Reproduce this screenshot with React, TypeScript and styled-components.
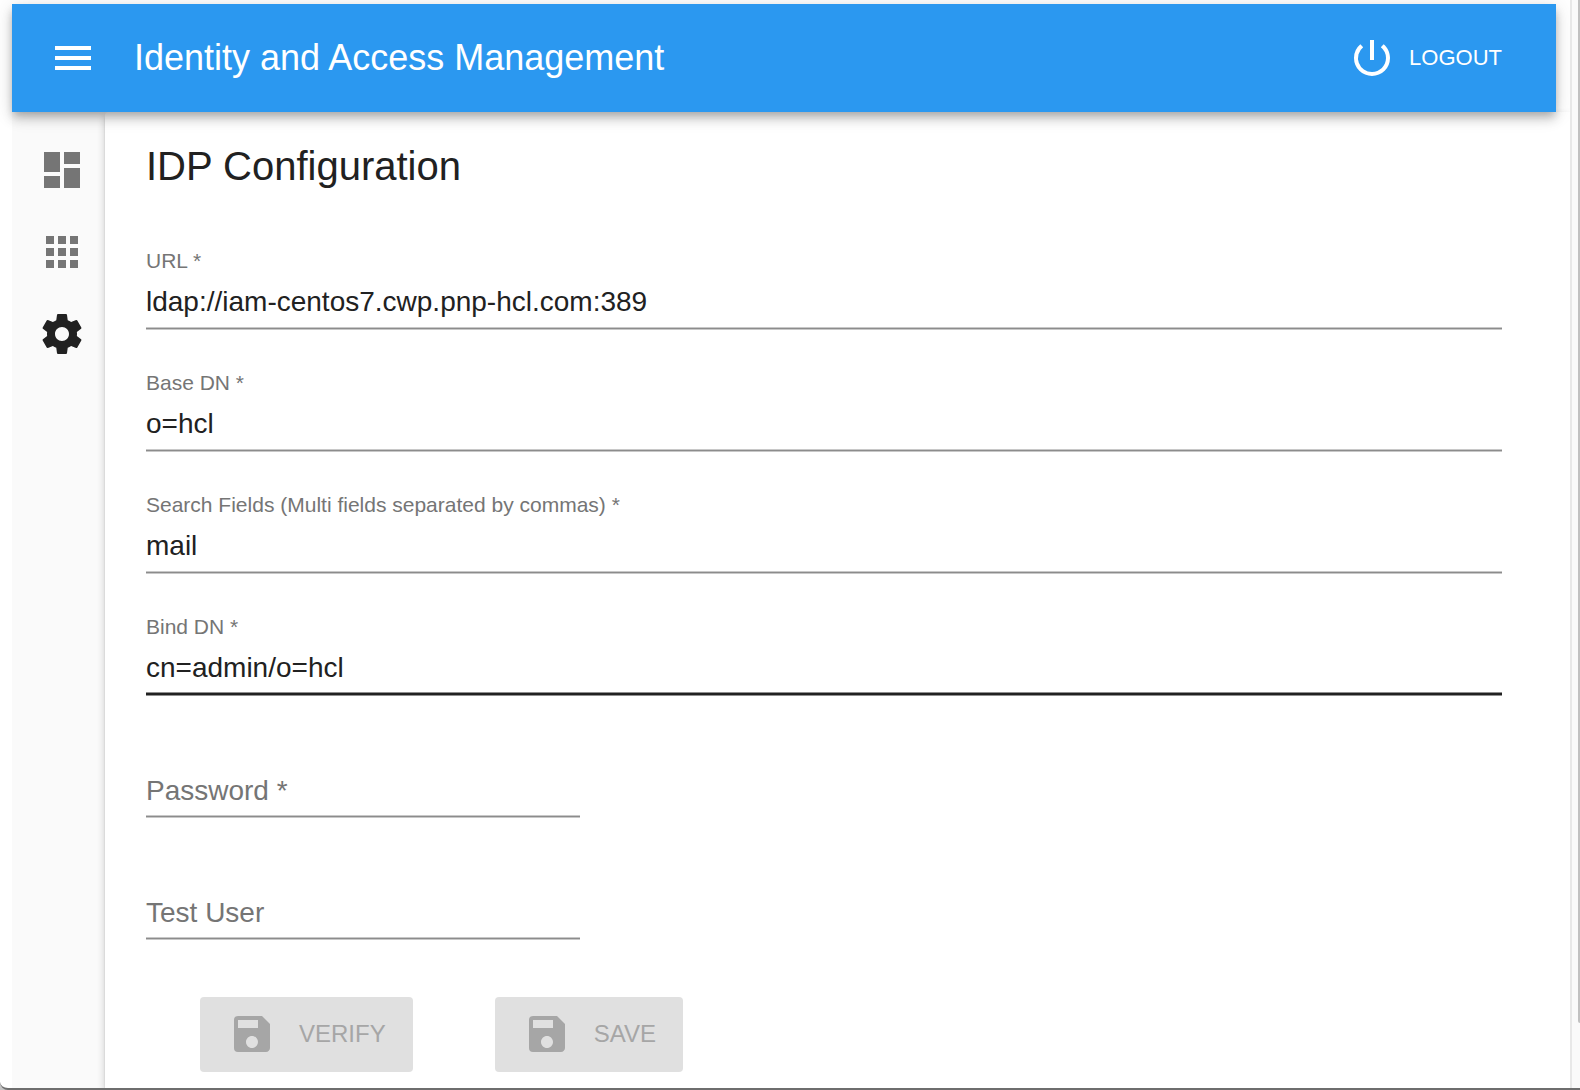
import React, { useState } from "react";
import styled, { createGlobalStyle } from "styled-components";
import { MdApps, MdDashboard, MdMenu, MdPowerSettingsNew, MdSave } from "react-icons/md";

const GlobalStyle = createGlobalStyle`
  *, *::before, *::after { box-sizing: border-box; }
  body {
    margin: 0;
    background: #c4c4c4;
    color: #212121;
    font-family: "Liberation Sans", Arial, Helvetica, sans-serif;
  }
  button, input { font: inherit; letter-spacing: inherit; }
`;

const Window = styled.div`
  display: grid;
  grid-template-columns: minmax(0, 1fr) 10px;
  min-height: 100vh;
  overflow: hidden;
  background: #fff;
  border-bottom: 2px solid #6e6e6e;
  border-bottom-left-radius: 8px;
`;

const Page = styled.div`
  display: flex;
  flex-direction: column;
  padding: 4px 0 0 12px;
  overflow: hidden;
`;

const ScrollTrack = styled.div`
  display: flex;
  justify-content: flex-end;
  background: #fafafa;
  border-left: 2px solid #e8e8e8;
`;

const ScrollThumb = styled.div`
  width: 2px;
  height: 94%;
  background: #c1c1c1;
  border-bottom-left-radius: 2px;
`;

const AppBar = styled.header`
  z-index: 2;
  display: flex;
  align-items: center;
  height: 108px;
  margin-right: 14px;
  padding: 0 54px 0 37px;
  color: #fff;
  background: #2b98f0;
  box-shadow:
    0 4px 8px -2px rgba(0, 0, 0, 0.2),
    0 8px 10px 0 rgba(0, 0, 0, 0.14),
    0 2px 20px 0 rgba(0, 0, 0, 0.12);
`;

const BarButton = styled.button`
  display: flex;
  align-items: center;
  gap: 13px;
  padding: 0;
  border: 0;
  background: none;
  color: inherit;
  font-size: 22px;
  line-height: 24px;
  cursor: pointer;
`;

const AppTitle = styled.div`
  flex: 1;
  margin-left: 37px;
  font-size: 36px;
  line-height: 48px;
`;

const Body = styled.div`
  flex: 1;
  display: flex;
`;

const SideNav = styled.nav`
  display: flex;
  flex-direction: column;
  gap: 34px;
  width: 93px;
  padding: 34px 0 0 26px;
  background: #fafafa;
`;

const NavLink = styled.a<{ $active?: boolean }>`
  display: block;
  width: 48px;
  height: 48px;
  color: ${(p) => (p.$active ? "#212121" : "#757575")};
`;

const Content = styled.main`
  z-index: 1;
  flex: 1;
  padding: 30px 68px 16px 41px;
  background: #fff;
  border-top-left-radius: 4px;
  box-shadow:
    0 4px 8px 0 rgba(0, 0, 0, 0.2),
    0 4px 2px 0 rgba(0, 0, 0, 0.14);
`;

const Heading = styled.h1`
  margin: 0 0 59px;
  font-size: 40px;
  font-weight: 400;
  line-height: 48px;
`;

const Fields = styled.div`
  display: flex;
  flex-direction: column;
  gap: 42px;
`;

const Field = styled.div<{ $short?: boolean }>`
  display: grid;
  grid-template-rows: 24px 56px;
  width: ${(p) => (p.$short ? "32%" : "100%")};
`;

const Label = styled.label<{ $resting: boolean }>`
  grid-column: 1;
  grid-row: ${(p) => (p.$resting ? 2 : 1)};
  align-self: end;
  padding-bottom: ${(p) => (p.$resting ? "10px" : "0")};
  color: #757575;
  font-size: ${(p) => (p.$resting ? "28px" : "21px")};
  line-height: ${(p) => (p.$resting ? "32px" : "24px")};
  pointer-events: none;
`;

const Input = styled.input<{ $highlight?: boolean }>`
  grid-column: 1;
  grid-row: 2;
  width: 100%;
  padding: 3px 0 0;
  border: 0;
  border-bottom: 1px solid ${(p) => (p.$highlight ? "#212121" : "#8c8c8c")};
  border-radius: 0;
  outline: 0;
  background: none;
  color: #212121;
  font-size: 28px;
  box-shadow: ${(p) =>
    p.$highlight
      ? "0 1px 0 #8f8f8f, inset 0 -1px 0 #212121, inset 0 -2px 0 #8f8f8f"
      : "0 1px 0 #c8c8c8, inset 0 -1px 0 #c8c8c8"};
`;

const Actions = styled.div`
  display: flex;
  gap: 82px;
  margin-top: 58px;
  padding-left: 54px;
`;

const ActionButton = styled.button`
  display: flex;
  align-items: center;
  gap: 23px;
  height: 75px;
  padding: 0 27px 1px 28px;
  border: 0;
  border-radius: 4px;
  background: #e0e0e0;
  color: #a6a6a6;
  font-size: 24px;
  line-height: 28px;
`;

const SettingsIcon = () => (
  <svg viewBox="0 0 24 24" width="48" height="48" fill="currentColor" aria-hidden="true">
    <path d="M19.43 12.98c.04-.32.07-.64.07-.98s-.03-.66-.07-.98l2.11-1.65c.19-.15.24-.42.12-.64l-2-3.46c-.12-.22-.39-.3-.61-.22l-2.49 1c-.52-.4-1.08-.73-1.69-.98l-.38-2.65C14.46 2.18 14.25 2 14 2h-4c-.25 0-.46.18-.49.42l-.38 2.65c-.61.25-1.17.59-1.69.98l-2.49-1c-.23-.09-.49 0-.61.22l-2 3.46c-.13.22-.07.49.12.64l2.11 1.65c-.04.32-.07.65-.07.98s.03.66.07.98l-2.11 1.65c-.19.15-.24.42-.12.64l2 3.46c.12.22.39.3.61.22l2.49-1c.52.4 1.08.73 1.69.98l.38 2.65c.03.24.24.42.49.42h4c.25 0 .46-.18.49-.42l.38-2.65c.61-.25 1.17-.59 1.69-.98l2.49 1c.23.09.49 0 .61-.22l2-3.46c.12-.22.07-.49-.12-.64l-2.11-1.65zM12 15.5c-1.93 0-3.5-1.57-3.5-3.5s1.57-3.5 3.5-3.5 3.5 1.57 3.5 3.5-1.57 3.5-3.5 3.5z" />
  </svg>
);

type FieldSpec = {
  id: string;
  label: string;
  initial: string;
  type?: string;
  short?: boolean;
  highlight?: boolean;
};

const FIELDS: FieldSpec[] = [
  { id: "url", label: "URL *", initial: "ldap://iam-centos7.cwp.pnp-hcl.com:389" },
  { id: "base-dn", label: "Base DN *", initial: "o=hcl" },
  { id: "search-fields", label: "Search Fields (Multi fields separated by commas) *", initial: "mail" },
  { id: "bind-dn", label: "Bind DN *", initial: "cn=admin/o=hcl", highlight: true },
  { id: "password", label: "Password *", initial: "", type: "password", short: true },
  { id: "test-user", label: "Test User", initial: "", short: true },
];

function TextField({ id, label, initial, type = "text", short, highlight }: FieldSpec) {
  const [value, setValue] = useState(initial);
  const [focused, setFocused] = useState(false);
  return (
    <Field $short={short}>
      <Label htmlFor={id} $resting={!value && !focused}>
        {label}
      </Label>
      <Input
        id={id}
        type={type}
        value={value}
        $highlight={highlight || focused}
        spellCheck={false}
        onChange={(e) => setValue(e.target.value)}
        onFocus={() => setFocused(true)}
        onBlur={() => setFocused(false)}
      />
    </Field>
  );
}

export default function App() {
  return (
    <>
      <GlobalStyle />
      <Window>
        <Page>
          <AppBar>
            <BarButton type="button" aria-label="Menu">
              <MdMenu size={48} />
            </BarButton>
            <AppTitle>Identity and Access Management</AppTitle>
            <BarButton type="button">
              <MdPowerSettingsNew size={48} />
              LOGOUT
            </BarButton>
          </AppBar>
          <Body>
            <SideNav>
              <NavLink href="#dashboard" aria-label="Dashboard">
                <MdDashboard size={48} />
              </NavLink>
              <NavLink href="#apps" aria-label="Applications">
                <MdApps size={48} />
              </NavLink>
              <NavLink href="#settings" aria-label="Settings" aria-current="page" $active>
                <SettingsIcon />
              </NavLink>
            </SideNav>
            <Content>
              <Heading>IDP Configuration</Heading>
              <form onSubmit={(e) => e.preventDefault()}>
                <Fields>
                  {FIELDS.map((field) => (
                    <TextField key={field.id} {...field} />
                  ))}
                </Fields>
                <Actions>
                  <ActionButton type="button" disabled>
                    <MdSave size={48} />
                    VERIFY
                  </ActionButton>
                  <ActionButton type="submit" disabled>
                    <MdSave size={48} />
                    SAVE
                  </ActionButton>
                </Actions>
              </form>
            </Content>
          </Body>
        </Page>
        <ScrollTrack>
          <ScrollThumb />
        </ScrollTrack>
      </Window>
    </>
  );
}
